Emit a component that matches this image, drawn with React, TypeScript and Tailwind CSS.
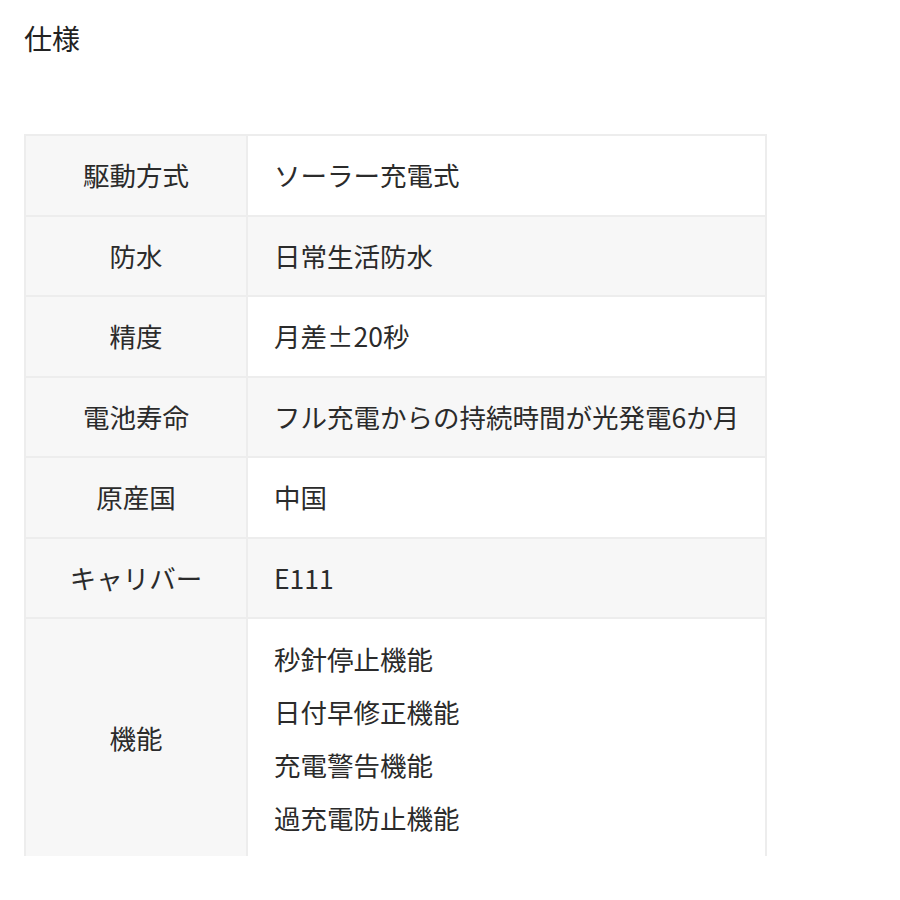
const specs: { label: string; value: string[] }[] = [
  { label: '駆動方式', value: ['ソーラー充電式'] },
  { label: '防水', value: ['日常生活防水'] },
  { label: '精度', value: ['月差±20秒'] },
  { label: '電池寿命', value: ['フル充電からの持続時間が光発電6か月'] },
  { label: '原産国', value: ['中国'] },
  { label: 'キャリバー', value: ['E111'] },
  { label: '機能', value: ['秒針停止機能', '日付早修正機能', '充電警告機能', '過充電防止機能'] },
];

export default function App() {
  return (
    <div
      className="min-h-[900px] w-[900px] bg-white text-[#2b2b2b]"
      style={{ fontFamily: '"Noto Sans CJK JP", "Noto Sans", sans-serif' }}
    >
      <h2 className="pl-6 pt-[18px] text-[28px] leading-[40px] font-normal text-[#222]">仕様</h2>

      <div className="ml-6 mt-[76px] w-[743px] border-t-2 border-l-2 border-r-2 border-[#ededed]">
        {specs.map((row, i) => {
          const last = i === specs.length - 1;
          return (
            <div
              key={row.label}
              className={
                'grid grid-cols-[222px_1fr] ' +
                (last ? 'h-[237px]' : 'h-[80.5px] border-b-2 border-[#ededed]')
              }
            >
              <div className="flex items-center justify-center border-r-2 border-[#ededed] bg-[#f7f7f7] text-[26.5px]">
                {row.label}
              </div>
              <div
                className={
                  'flex flex-col justify-center pl-[26px] text-[26.5px] ' +
                  (i % 2 === 1 ? 'bg-[#f7f7f7]' : 'bg-white')
                }
              >
                {row.value.map((v) => (
                  <div key={v} className={row.value.length > 1 ? 'leading-[53px]' : 'leading-[36px]'}>
                    {v}
                  </div>
                ))}
              </div>
            </div>
          );
        })}
      </div>
    </div>
  );
}
